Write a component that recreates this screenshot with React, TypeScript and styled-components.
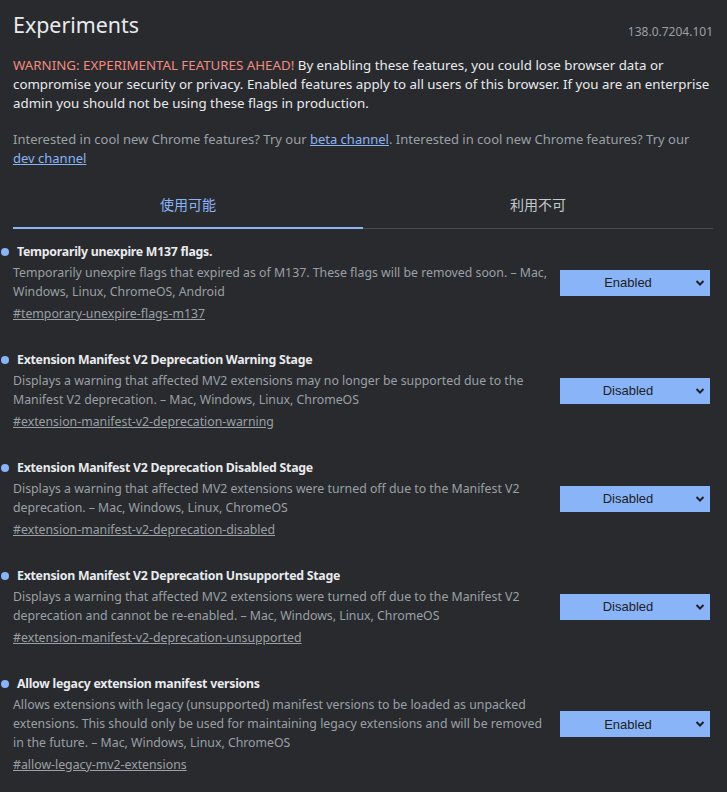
import styled, { createGlobalStyle } from 'styled-components'

const GlobalStyle = createGlobalStyle`
  html, body {
    margin: 0;
    background: #292a2d;
  }
  body {
    font-family: 'Noto Sans', 'Noto Sans CJK JP', sans-serif;
    color: #e8eaed;
  }
`

const Page = styled.div`
  padding: 8px 17px 20px 13px;
`

const Header = styled.header`
  display: flex;
  justify-content: space-between;
  align-items: flex-start;
`

const Title = styled.h1`
  margin: 0;
  font-size: 21.4px;
  font-weight: 400;
  line-height: 34px;
  color: #e8eaed;
`

const Version = styled.span`
  margin: 15px -3px 0 0;
  font-size: 12px;
  color: #9aa0a6;
`

const Blurb = styled.p<{ $muted?: boolean }>`
  margin: 0;
  font-size: ${(p) => (p.$muted ? '13px' : '13.3px')};
  line-height: 19px;
  color: ${(p) => (p.$muted ? '#9aa0a6' : '#e8eaed')};
  & + & {
    margin-top: 17px;
  }
`

const Blurbs = styled.div`
  margin-top: 14px;
  margin-right: -3px;
`

const Warning = styled.span`
  color: #f28b82;
`

const Link = styled.a`
  color: #8ab4f8;
  text-decoration: underline;
`

const Tabs = styled.nav`
  display: grid;
  grid-template-columns: 1fr 1fr;
  margin: 20px -3px 0 0;
  border-bottom: 1px solid #4a4c50;
`

const Tab = styled.div<{ $active?: boolean }>`
  display: flex;
  justify-content: center;
  padding: 7px 0 14px;
  line-height: 20px;
  font-size: 14px;
  color: ${(p) => (p.$active ? '#8ab4f8' : '#c4c7cc')};
  box-shadow: ${(p) => (p.$active ? 'inset 0 -2px 0 #8ab4f8' : 'none')};
  margin-bottom: -1px;
`

const List = styled.div`
  display: flex;
  flex-direction: column;
  gap: 27px;
  margin-top: 13px;
`

const Row = styled.section`
  display: flex;
  align-items: center;
  gap: 10px;
`

const Info = styled.div`
  flex: 1;
  min-width: 0;
`

const Name = styled.h2`
  display: flex;
  align-items: center;
  gap: 8px;
  margin: 0 0 2px -12px;
  font-size: 12.3px;
  font-weight: 700;
  letter-spacing: -0.25px;
  line-height: 19px;
  color: #e8eaed;
`

const Dot = styled.span`
  width: 8px;
  height: 8px;
  border-radius: 50%;
  background: #8ab4f8;
  flex-shrink: 0;
`

const Desc = styled.p`
  margin: 0;
  font-size: 12.3px;
  line-height: 19px;
  color: #9aa0a6;
`

const Permalink = styled.a`
  display: inline-block;
  margin-top: 3px;
  font-size: 12.3px;
  line-height: 19px;
  color: #9aa0a6;
  text-decoration: underline;
`

const SelectWrap = styled.div`
  position: relative;
  width: 150px;
  flex-shrink: 0;
`

const Select = styled.select`
  appearance: none;
  width: 100%;
  height: 26px;
  border: none;
  border-radius: 0;
  background: #8ab4f8;
  color: #202124;
  font-family: 'Liberation Sans', Arial, sans-serif;
  font-size: 13px;
  text-align: center;
  text-align-last: center;
  padding: 0 14px 0 0;
  outline: none;
`

const Chevron = styled.svg`
  position: absolute;
  right: 5px;
  top: 9px;
  width: 10px;
  height: 8px;
  pointer-events: none;
`

type Flag = {
  name: string
  desc: string
  id: string
  value: 'Enabled' | 'Disabled'
}

const flags: Flag[] = [
  {
    name: 'Temporarily unexpire M137 flags.',
    desc: 'Temporarily unexpire flags that expired as of M137. These flags will be removed soon. – Mac, Windows, Linux, ChromeOS, Android',
    id: 'temporary-unexpire-flags-m137',
    value: 'Enabled',
  },
  {
    name: 'Extension Manifest V2 Deprecation Warning Stage',
    desc: 'Displays a warning that affected MV2 extensions may no longer be supported due to the Manifest V2 deprecation. – Mac, Windows, Linux, ChromeOS',
    id: 'extension-manifest-v2-deprecation-warning',
    value: 'Disabled',
  },
  {
    name: 'Extension Manifest V2 Deprecation Disabled Stage',
    desc: 'Displays a warning that affected MV2 extensions were turned off due to the Manifest V2 deprecation. – Mac, Windows, Linux, ChromeOS',
    id: 'extension-manifest-v2-deprecation-disabled',
    value: 'Disabled',
  },
  {
    name: 'Extension Manifest V2 Deprecation Unsupported Stage',
    desc: 'Displays a warning that affected MV2 extensions were turned off due to the Manifest V2 deprecation and cannot be re-enabled. – Mac, Windows, Linux, ChromeOS',
    id: 'extension-manifest-v2-deprecation-unsupported',
    value: 'Disabled',
  },
  {
    name: 'Allow legacy extension manifest versions',
    desc: 'Allows extensions with legacy (unsupported) manifest versions to be loaded as unpacked extensions. This should only be used for maintaining legacy extensions and will be removed in the future. – Mac, Windows, Linux, ChromeOS',
    id: 'allow-legacy-mv2-extensions',
    value: 'Enabled',
  },
]

const App = () => {
  return (
    <Page>
      <GlobalStyle />
      <Header>
        <Title>Experiments</Title>
        <Version>138.0.7204.101</Version>
      </Header>
      <Blurbs>
        <Blurb>
          <Warning>WARNING: EXPERIMENTAL FEATURES AHEAD!</Warning> By enabling these features, you could lose
          browser data or compromise your security or privacy. Enabled features apply to all users of this
          browser. If you are an enterprise admin you should not be using these flags in production.
        </Blurb>
        <Blurb $muted>
          Interested in cool new Chrome features? Try our <Link href="#">beta channel</Link>. Interested in cool
          new Chrome features? Try our <Link href="#">dev channel</Link>
        </Blurb>
      </Blurbs>
      <Tabs>
        <Tab $active>使用可能</Tab>
        <Tab>利用不可</Tab>
      </Tabs>
      <List>
        {flags.map((f) => (
          <Row key={f.id}>
            <Info>
              <Name>
                <Dot />
                {f.name}
              </Name>
              <Desc>{f.desc}</Desc>
              <Permalink href={`#${f.id}`}>#{f.id}</Permalink>
            </Info>
            <SelectWrap>
              <Select defaultValue={f.value}>
                <option>Default</option>
                <option>Enabled</option>
                <option>Disabled</option>
              </Select>
              <Chevron viewBox="0 0 10 8">
                <path d="M1.5 2 L5 5.5 L8.5 2" fill="none" stroke="#202124" strokeWidth="2" />
              </Chevron>
            </SelectWrap>
          </Row>
        ))}
      </List>
    </Page>
  )
}

export default App
